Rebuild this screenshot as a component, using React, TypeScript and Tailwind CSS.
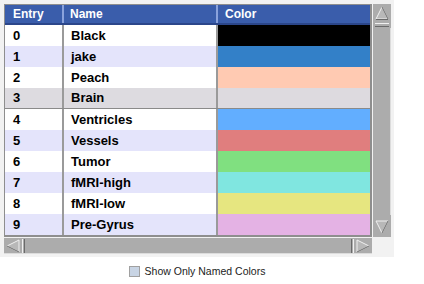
import React from "react";

const rows = [
  { e: "0", n: "Black", c: "#000000" },
  { e: "1", n: "jake", c: "#3380c8" },
  { e: "2", n: "Peach", c: "#ffcab2" },
  { e: "3", n: "Brain", c: "#dddadf" },
  { e: "4", n: "Ventricles", c: "#62aeff" },
  { e: "5", n: "Vessels", c: "#e07e7e" },
  { e: "6", n: "Tumor", c: "#80e080" },
  { e: "7", n: "fMRI-high", c: "#80e6e0" },
  { e: "8", n: "fMRI-low", c: "#e6e680" },
  { e: "9", n: "Pre-Gyrus", c: "#e4b2e4" },
];

function rowBg(i: number) {
  if (i === 3) return "bg-[#dddbe0]";
  return i % 2 === 1 ? "bg-[#e4e4fb]" : "bg-white";
}

export default function App() {
  return (
    <div
      className="w-[424px] h-[284px] bg-white relative"
      style={{ fontFamily: '"Liberation Sans", Arial, sans-serif' }}
    >
      <div className="flex flex-col w-[394px] bg-[#f2f2f2] pt-[4px] pl-[4px] pb-[3px]">
        <div className="flex">
          {/* table */}
          <div className="w-[368px] border-t border-l border-[#8e8e8e] border-b-2 border-r-2 border-b-[#8e8e8e] border-r-[#8e8e8e] bg-white">
            <div className="flex h-[20px] bg-[#3a5dab] text-white font-bold text-[12px] border-b-2 border-[#2b468a]">
              <div className="w-[59px] pl-[8px] flex items-center border-r-2 border-[#8aa2dc]">Entry</div>
              <div className="w-[154px] pl-[6px] flex items-center border-r-2 border-[#8aa2dc]">Name</div>
              <div className="flex-1 pl-[7px] flex items-center">Color</div>
            </div>
            {rows.map((r, i) => (
              <div key={r.e} className={`flex h-[21px] text-[13px] font-bold text-black ${rowBg(i)} ${i === 3 ? "border-b border-[#8a8a8a]" : ""}`}>
                <div className="w-[59px] pl-[8px] flex items-center border-r-2 border-[#9a9a9a]">{r.e}</div>
                <div className="w-[154px] pl-[7px] flex items-center border-r-2 border-[#9a9a9a]">{r.n}</div>
                <div className="flex-1" style={{ backgroundColor: r.c }} />
              </div>
            ))}
          </div>
          {/* vertical scrollbar */}
          <div className="ml-[1px] w-[18px] h-[233px] bg-[#acacac] flex flex-col justify-between border-r border-[#dcdcdc]">
            <svg width="18" height="24" viewBox="0 0 18 24">
              <rect x="0" y="0" width="18" height="24" fill="#acacac" />
              <polygon points="9,3 15,15 3,15" fill="#b8b8b8" stroke="#f0f0f0" strokeWidth="1" />
              <line x1="3" y1="15.5" x2="15" y2="15.5" stroke="#6a6a6a" />
              <line x1="9" y1="3" x2="15" y2="15" stroke="#6a6a6a" />
              <line x1="2" y1="19.5" x2="16" y2="19.5" stroke="#f0f0f0" />
              <line x1="2" y1="22.5" x2="16" y2="22.5" stroke="#6a6a6a" />
            </svg>
            <svg width="18" height="22" viewBox="0 0 18 22">
              <rect x="0" y="0" width="18" height="22" fill="#acacac" />
              <polygon points="3,6 15,6 9,18" fill="#b8b8b8" stroke="#f0f0f0" strokeWidth="1" />
              <line x1="15" y1="6" x2="9" y2="18" stroke="#6a6a6a" />
            </svg>
          </div>
        </div>
        {/* horizontal scrollbar */}
        <div className="mt-[1px] w-[368px] h-[16px] bg-[#acacac] flex justify-between border-b border-[#dcdcdc]">
          <svg width="22" height="16" viewBox="0 0 22 16">
            <polygon points="3,8 15,2 15,14" fill="#b8b8b8" stroke="#f0f0f0" />
            <line x1="15" y1="14" x2="3" y2="8" stroke="#6a6a6a" />
            <line x1="18.5" y1="1" x2="18.5" y2="15" stroke="#f0f0f0" />
            <line x1="20.5" y1="1" x2="20.5" y2="15" stroke="#6a6a6a" />
          </svg>
          <svg width="22" height="16" viewBox="0 0 22 16">
            <line x1="1.5" y1="1" x2="1.5" y2="15" stroke="#6a6a6a" />
            <line x1="3.5" y1="1" x2="3.5" y2="15" stroke="#f0f0f0" />
            <polygon points="19,8 7,2 7,14" fill="#b8b8b8" stroke="#f0f0f0" />
            <line x1="7" y1="14" x2="19" y2="8" stroke="#6a6a6a" />
          </svg>
        </div>
      </div>
      <div className="flex items-center justify-center mt-[7px] w-[394px] gap-[5px]">
        <div className="w-[11px] h-[11px] border border-[#a0a0a0] bg-[#c8d4e4]" />
        <span className="text-[10.5px] text-[#222]">Show Only Named Colors</span>
      </div>
    </div>
  );
}
